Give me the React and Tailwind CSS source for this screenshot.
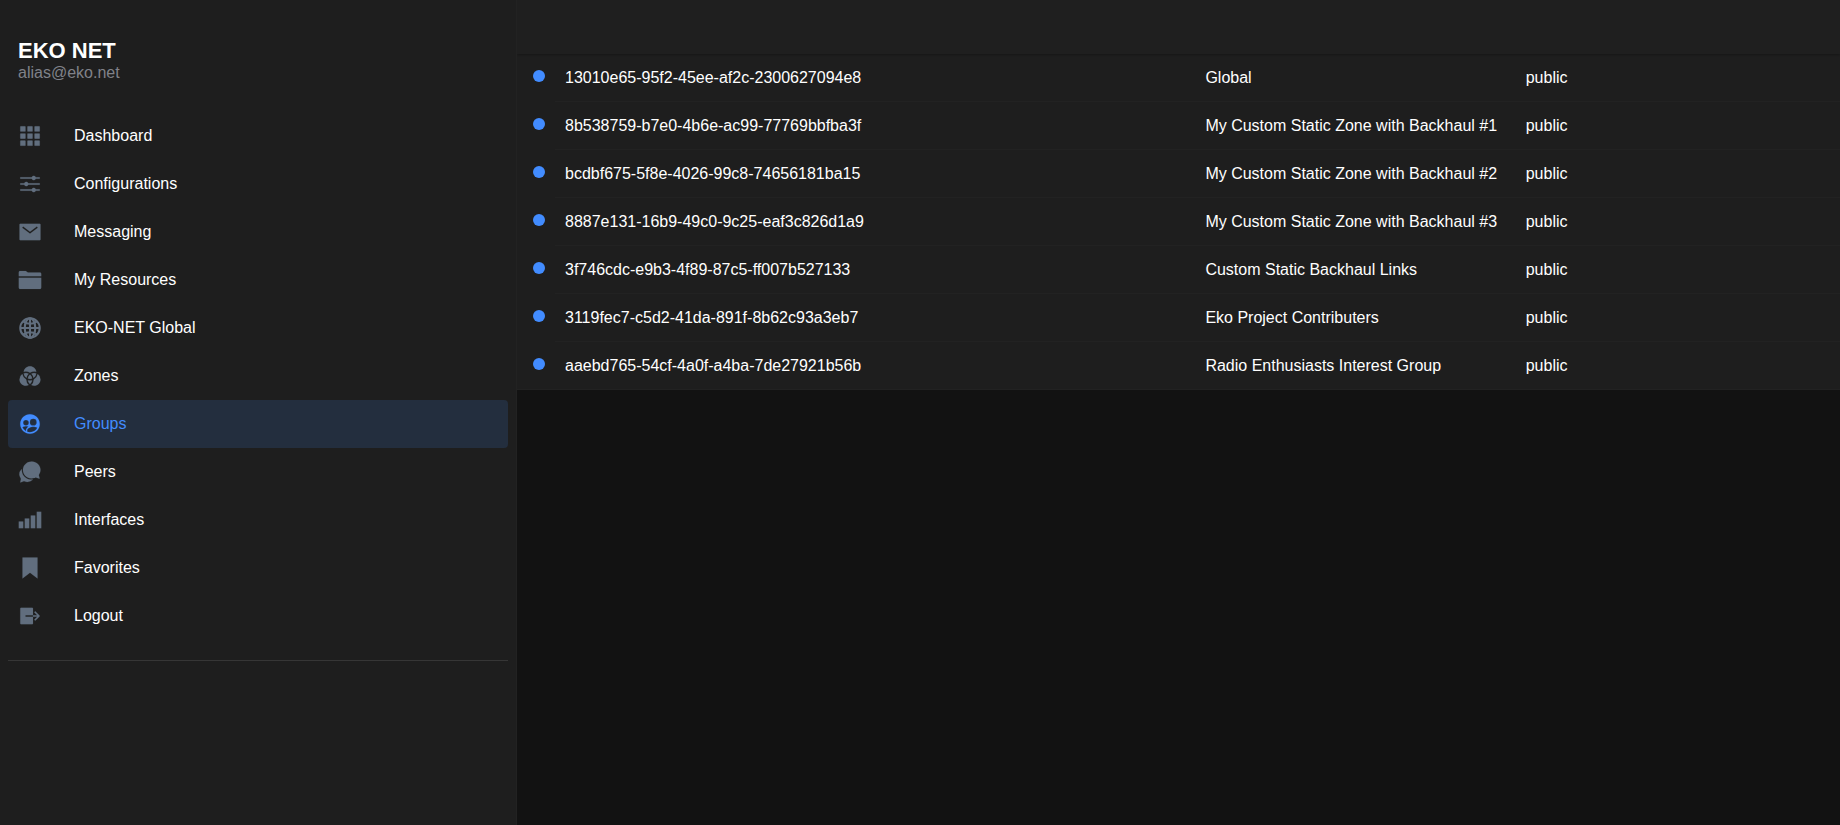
import {
  IoAppsSharp,
  IoOptionsSharp,
  IoMailSharp,
  IoFolderSharp,
  IoGlobeSharp,
  IoColorFilterSharp,
  IoPeopleCircleSharp,
  IoChatbubblesSharp,
  IoCellularSharp,
  IoBookmarkSharp,
  IoLogOutSharp,
} from "react-icons/io5";

const menu = [
  ["Dashboard", IoAppsSharp],
  ["Configurations", IoOptionsSharp],
  ["Messaging", IoMailSharp],
  ["My Resources", IoFolderSharp],
  ["EKO-NET Global", IoGlobeSharp],
  ["Zones", IoColorFilterSharp],
  ["Groups", IoPeopleCircleSharp],
  ["Peers", IoChatbubblesSharp],
  ["Interfaces", IoCellularSharp],
  ["Favorites", IoBookmarkSharp],
  ["Logout", IoLogOutSharp],
];

const groups = [
  ["13010e65-95f2-45ee-af2c-2300627094e8", "Global"],
  ["8b538759-b7e0-4b6e-ac99-77769bbfba3f", "My Custom Static Zone with Backhaul #1"],
  ["bcdbf675-5f8e-4026-99c8-74656181ba15", "My Custom Static Zone with Backhaul #2"],
  ["8887e131-16b9-49c0-9c25-eaf3c826d1a9", "My Custom Static Zone with Backhaul #3"],
  ["3f746cdc-e9b3-4f89-87c5-ff007b527133", "Custom Static Backhaul Links"],
  ["3119fec7-c5d2-41da-891f-8b62c93a3eb7", "Eko Project Contributers"],
  ["aaebd765-54cf-4a0f-a4ba-7de27921b56b", "Radio Enthusiasts Interest Group"],
];

function MenuItem({ label, Icon, active }) {
  return (
    <a
      className={`flex h-12 items-center rounded-sm pl-2.5 ${
        active ? "bg-[#232e3e] text-[#428cff]" : "text-white"
      }`}
    >
      <Icon
        strokeWidth={3}
        className={`mr-8 size-6 ${active ? "text-[#428cff]" : "text-[#616e7e]"}`}
      />
      <span className="leading-5">{label}</span>
    </a>
  );
}

function GroupRow({ id, name, last }) {
  return (
    <div className={`flex h-12 bg-[#1e1e1e] pl-4 ${last ? "border-b border-[#222222]" : ""}`}>
      <div className="mt-4 mr-2.5 size-3 shrink-0 rounded-full bg-[#428cff]" />
      <div
        className={`grid flex-1 grid-cols-[640.4px_320.3px_320px] items-center pl-[5px] ${
          last ? "" : "border-b border-[#222222]"
        }`}
      >
        <span className="pl-[5px]">{id}</span>
        <span className="pl-[5px]">{name}</span>
        <span className="pl-[5px]">public</span>
      </div>
    </div>
  );
}

export default function App() {
  return (
    <div className="flex h-screen overflow-hidden bg-[#121212] font-['Liberation_Sans',Arial,sans-serif] text-base text-white">
      <aside className="w-[517px] shrink-0 border-r border-[#222222] bg-[#1e1e1e] px-2 pt-[38px]">
        <h1 className="pl-2.5 text-[22px] leading-[26px] font-semibold">EKO NET</h1>
        <p className="h-12 pl-2.5 leading-[18px] text-[#808289]">alias@eko.net</p>
        <nav>
          {menu.map(([label, Icon]) => (
            <MenuItem key={label} label={label} Icon={Icon} active={label === "Groups"} />
          ))}
        </nav>
        <hr className="mt-5 border-[#363636]" />
      </aside>
      <main className="min-w-0 flex-1 overflow-hidden">
        <header className="relative h-[54px] bg-[#1f1f1f] shadow-[0_1px_2px_rgba(0,0,0,0.25)]" />
        {groups.map(([id, name], i) => (
          <GroupRow key={id} id={id} name={name} last={i === groups.length - 1} />
        ))}
      </main>
    </div>
  );
}
